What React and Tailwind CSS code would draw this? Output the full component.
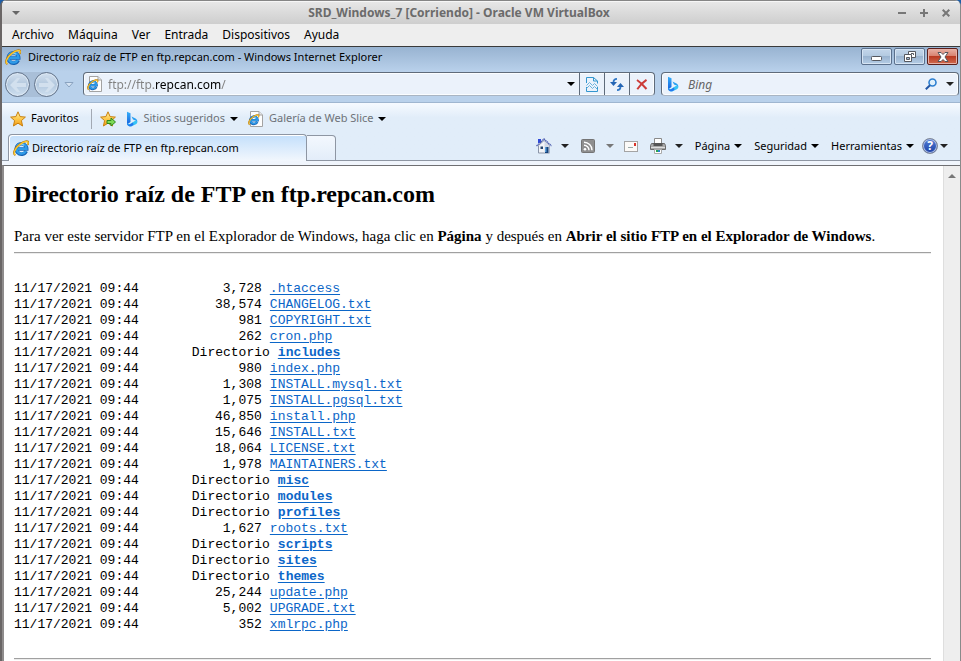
import React from "react";

const files = [
  ["3,728", ".htaccess"],
  ["38,574", "CHANGELOG.txt"],
  ["981", "COPYRIGHT.txt"],
  ["262", "cron.php"],
  [null, "includes"],
  ["980", "index.php"],
  ["1,308", "INSTALL.mysql.txt"],
  ["1,075", "INSTALL.pgsql.txt"],
  ["46,850", "install.php"],
  ["15,646", "INSTALL.txt"],
  ["18,064", "LICENSE.txt"],
  ["1,978", "MAINTAINERS.txt"],
  [null, "misc"],
  [null, "modules"],
  [null, "profiles"],
  ["1,627", "robots.txt"],
  [null, "scripts"],
  [null, "sites"],
  [null, "themes"],
  ["25,244", "update.php"],
  ["5,002", "UPGRADE.txt"],
  ["352", "xmlrpc.php"],
];

function IeMark() {
  return (
    <>
      <path d="M13.200 11.200A5.200 5.200 0 1 1 13.700 9H5" fill="none" stroke="#1763b4" strokeWidth="3.600" />
      <path d="M12.900 11A5 5 0 1 1 13.500 8.800H5" fill="none" stroke="#2f9be8" strokeWidth="2.400" />
      <path d="M4.200 6.500a5 5 0 0 1 7-1.200" fill="none" stroke="#7fd4fb" strokeWidth="1.400" />
      <path d="M2.400 15.200C-.8 13.600 2 7.600 6.800 4.200 10.800 1.200 15.200.2 15.400 2.400c.1.900-.2 1.600-.6 2.400" fill="none" stroke="#b97d10" strokeWidth="1.800" />
      <path d="M2.300 14.900C0 13.400 2.400 7.800 7 4.400 11 1.500 14.900.8 15.100 2.500c.1.700-.2 1.300-.5 2" fill="none" stroke="#fbc931" strokeWidth="1.300" />
    </>
  );
}

function IeIcon() {
  return (
    <svg className="size-4 shrink-0" viewBox="0 0 16 16" aria-hidden="true">
      <IeMark />
    </svg>
  );
}

function IePageIcon() {
  return (
    <svg className="size-4 shrink-0" viewBox="0 0 16 16" aria-hidden="true">
      <path d="M2.500.5h8.500l3.500 3.500v11.500h-12z" fill="#fdfdfd" stroke="#a3a3a3" />
      <path d="M11 .5V4h3.500" fill="#e8e8e8" stroke="#a3a3a3" />
      <g transform="translate(0 3) scale(.7)">
        <IeMark />
      </g>
    </svg>
  );
}

function Star({ arrow }) {
  return (
    <svg className="size-4 shrink-0" viewBox="0 0 16 16" aria-hidden="true">
      <defs>
        <linearGradient id={arrow ? "starB" : "starA"} x1="0" y1="0" x2="0" y2="1">
          <stop offset="0" stopColor="#fff3a8" />
          <stop offset=".5" stopColor="#fdc94b" />
          <stop offset="1" stopColor="#f39a16" />
        </linearGradient>
      </defs>
      <path
        d="M8 .8l2.100 4.800 5.300.5-4 3.500 1.200 5.400L8 12.200 3.400 15l1.200-5.400-4-3.500 5.300-.5z"
        fill={arrow ? "url(#starB)" : "url(#starA)"}
        stroke="#c8800f"
        strokeLinejoin="round"
      />
      {arrow && <path d="M7 9.500h4V7l4.500 4-4.500 4v-2.500H7z" fill="#7ed957" stroke="#2c8a1c" strokeLinejoin="round" />}
    </svg>
  );
}

function BingIcon({ id }) {
  return (
    <svg className="h-4 w-3 shrink-0" viewBox="0 0 12 16" aria-hidden="true">
      <defs>
        <linearGradient id={id} x1="0" y1="0" x2="0" y2="1">
          <stop offset="0" stopColor="#35b0fa" />
          <stop offset="1" stopColor="#1661dd" />
        </linearGradient>
      </defs>
      <path d="M1 .8l3.500 1.400v8.800L1 13.500z" fill={`url(#${id})`} />
      <path d="M5.500 5.600l4 1.800c1.500.8 2.200 2.200 1.700 4-.6-1.400-1.200-1.800-2.400-2.200L7 8.400z" fill="#2aa0f2" />
      <path d="M1 12.500l3 .5L8.800 10c1.500-.5 2.700.2 2.400 1.600-.2 1-.9 1.500-1.800 2L5.500 15.200c-2.300.7-4.500-.6-4.500-2.700z" fill="#35c3f5" />
      <path d="M1 12.500c.8 1.200 2 1.300 3 .7l3-1.800.5 2.300L5.500 15.200c-2.200.6-4.500-.6-4.500-2.700z" fill="#2478ee" />
    </svg>
  );
}

function Caret({ className = "text-black" }) {
  return (
    <svg className={`h-1 w-2 shrink-0 ${className}`} viewBox="0 0 8 4" aria-hidden="true">
      <path d="M0 0h8L4 4z" fill="currentColor" />
    </svg>
  );
}

function NavButton({ label, flip }) {
  return (
    <button
      aria-label={label}
      className="grid size-[25px] shrink-0 place-items-center rounded-full border border-[#64758c] bg-linear-to-b from-[#d3e0ee] via-[#b3c8de] to-[#cfe0f0] shadow-[inset_0_0_0_1px_#dce8f4]"
    >
      <svg className={flip ? "h-[14px] w-4 rotate-180" : "h-[14px] w-4"} viewBox="0 0 16 14" aria-hidden="true">
        <path d="M0 7l7-7h3L6.500 5H16v4H6.500l3.500 5H7z" fill="#d2e0ee" />
      </svg>
    </button>
  );
}

function HomeIcon() {
  return (
    <svg className="size-4" viewBox="0 0 16 16" aria-hidden="true">
      <path d="M2 1h3v4H2z" fill="#2f49d8" />
      <path d="M2.500 7.500L8 2.500l5.500 5V15h-11z" fill="#f2f4f8" stroke="#8b95a8" />
      <path d="M8.500 3l5 4.500V15h-5z" fill="#d4dae6" />
      <path d="M.5 8L8 1l7.500 7" fill="none" stroke="#4d5cae" strokeWidth="1.300" strokeDasharray="1.500 .5" />
      <path d="M4.500 8.500h2.500v2.500H4.500z" fill="#27456b" />
      <path d="M9 9h3.500v6H9z" fill="#16437a" />
      <path d="M9 9h1.500v5H9z" fill="#5aa0dc" />
    </svg>
  );
}

function RssIcon() {
  return (
    <svg className="size-[14px]" viewBox="0 0 14 14" aria-hidden="true">
      <rect x=".5" y=".5" width="13" height="13" rx="1" fill="#8f8f8f" stroke="#747474" />
      <circle cx="4" cy="10.200" r="1.300" fill="#fff" />
      <path d="M3 6.200a5 5 0 0 1 5 5M3 3.200a8 8 0 0 1 8 8" fill="none" stroke="#fff" strokeWidth="1.400" />
    </svg>
  );
}

function MailIcon() {
  return (
    <svg className="h-[11px] w-[14px]" viewBox="0 0 14 11" aria-hidden="true">
      <rect x=".5" y=".5" width="13" height="10" fill="#fbfaf8" stroke="#a4a4a4" />
      <path d="M10 2h2v3h-2z" fill="#d9342b" />
      <path d="M4 6.500h5" stroke="#9aa" />
    </svg>
  );
}

function PrinterIcon() {
  return (
    <svg className="size-4" viewBox="0 0 16 16" aria-hidden="true">
      <path d="M4.500.5h7V6h-7z" fill="#fff" stroke="#8a8a8a" />
      <path d="M1.500 5.500h13l1 2v4H.5v-4z" fill="#a8a8a8" stroke="#6b6b6b" />
      <path d="M3.500 5h9v3h-9z" fill="#555" />
      <path d="M1 9.500h14" stroke="#dedede" />
      <path d="M4.500 11.500h7v4h-7z" fill="#fff" stroke="#aaa" />
      <path d="M6 12h2v2H6z" fill="#29a64e" />
      <path d="M8 12h2v2H8z" fill="#297fd5" />
    </svg>
  );
}

function HelpIcon() {
  return (
    <span className="grid size-4 place-items-center rounded-full border border-[#7f8797] bg-linear-to-b from-[#5580d8] to-[#1c3fa4] text-[12px] leading-3 font-bold text-white shadow-[inset_0_0_0_1px_#aebfe6]">
      ?
    </span>
  );
}

function CaptionButton({ label, danger, children }) {
  return (
    <button
      aria-label={label}
      className={
        danger
          ? "grid h-[17px] w-[31px] place-items-center rounded-xs border border-[#5c1f1b] bg-[linear-gradient(#e8b0a4,#d98371_45%,#b93a22_50%,#cf6a50)] shadow-[inset_0_0_0_1px_#e6b0a6]"
          : "grid h-[17px] w-[31px] place-items-center rounded-xs border border-[#5b708c] bg-[linear-gradient(#c3d6ea,#b4cae1_45%,#9ab4d0_50%,#b5cde6)] shadow-[inset_0_0_0_1px_#d6e4f3]"
      }
    >
      {children}
    </button>
  );
}

function ToolMenu({ label }) {
  return (
    <button className="flex items-center gap-1">
      {label}
      <Caret />
    </button>
  );
}

function VmTitleBar() {
  return (
    <header className="flex h-6 shrink-0 items-center border-t border-[#858585] bg-linear-to-b from-[#e8e8e8] to-[#cecece] px-[10px] shadow-[inset_0_1px_0_#f6f6f6]">
      <button aria-label="Menú de la ventana"><Caret className="text-[#666]" /></button>
      <h1 className="flex-1 text-center text-[12px] font-bold text-[#6b6b6b]">SRD_Windows_7 [Corriendo] - Oracle VM VirtualBox</h1>
      <div className="flex justify-end gap-[14px] text-[#777]">
        <button aria-label="Minimizar ventana">
          <svg className="size-2" viewBox="0 0 8 8"><path d="M0 4h8" stroke="currentColor" strokeWidth="2" /></svg>
        </button>
        <button aria-label="Maximizar ventana">
          <svg className="size-2" viewBox="0 0 8 8"><path d="M0 4h8M4 0v8" stroke="currentColor" strokeWidth="2" /></svg>
        </button>
        <button aria-label="Cerrar ventana">
          <svg className="size-2" viewBox="0 0 8 8"><path d="M.7.7l6.600 6.600M7.300.7L.7 7.300" stroke="currentColor" strokeWidth="2" /></svg>
        </button>
      </div>
    </header>
  );
}

function BrowserTop() {
  return (
    <div className="shrink-0 border-b border-[#9fb6d0] bg-linear-to-b from-[#98b3d1] to-[#b9d1eb] to-45%">
      <div className="flex h-[25px] items-start justify-between pr-0.5">
        <div className="flex items-center gap-[7px] pt-px pl-[3px] text-[11px] leading-[18px]">
          <IeIcon />
          Directorio raíz de FTP en ftp.repcan.com - Windows Internet Explorer
        </div>
        <div className="flex gap-0.5 pt-px">
          <CaptionButton label="Minimizar">
            <svg className="mt-1 h-[5px] w-[11px]" viewBox="0 0 11 5"><rect x=".5" y=".5" width="10" height="4" rx="1" fill="#fff" stroke="#55585f" /></svg>
          </CaptionButton>
          <CaptionButton label="Restaurar">
            <svg className="h-[11px] w-3" viewBox="0 0 12 11">
              <path d="M4.500.5h7v6h-7z" fill="#fff" stroke="#55585f" />
              <path d="M7 2.500h2.500V4" fill="none" stroke="#55585f" />
              <path d="M.5 3.500h7v7h-7z" fill="#fff" stroke="#55585f" />
              <path d="M2.500 6.500h3v2h-3z" fill="#9db7d3" stroke="#55585f" />
            </svg>
          </CaptionButton>
          <CaptionButton label="Cerrar" danger>
            <svg className="h-[10px] w-3" viewBox="0 0 12 10">
              <path d="M1 .5h3l2 2 2-2h3L8 5l3 4.500H8l-2-2-2 2H1L4 5z" fill="#fff" stroke="#54565c" />
            </svg>
          </CaptionButton>
        </div>
      </div>
      <div className="flex h-[30px] items-start gap-[6px] pr-px pl-[3px]">
        <div className="flex h-[25px] items-center">
          <div className="flex gap-1 rounded-full bg-[#a9bfd8]">
            <NavButton label="Atrás" />
            <NavButton label="Adelante" flip />
          </div>
          <button aria-label="Páginas recientes" className="ml-1 p-px">
            <svg className="h-[6px] w-[10px]" viewBox="0 0 10 6"><path d="M1 .5h8l-4 4.500z" fill="#d6e4f3" stroke="#8aa3c0" /></svg>
          </button>
        </div>
        <div className="ml-0.5 flex h-6 min-w-0 flex-1 items-stretch rounded-sm border border-[#5f6b7a] border-b-[#a9b5c3] bg-[#ebf2fb] shadow-[inset_0_0_0_1px_#fafdff]">
          <div className="flex min-w-0 flex-1 items-center gap-[5px] pr-1 pl-[3px]">
            <IePageIcon />
            <input
              aria-label="Dirección"
              defaultValue="ftp://ftp.repcan.com/"
              className="h-5 min-w-0 flex-1 bg-[linear-gradient(to_right,#808080_46px,#000_46px,#000_113px,#808080_113px)] bg-clip-text text-[12px] text-transparent outline-none"
            />
            <button aria-label="Mostrar direcciones"><Caret /></button>
          </div>
          <button aria-label="Vista de compatibilidad" className="grid w-[25px] place-items-center border-l border-[#5f6b7a]">
            <svg className="h-[15px] w-3" viewBox="0 0 12 15">
              <path d="M.5 6V.5h7l4 3.500v2.500M7.500.5v3.500h4M.5 10v4.500h11V10" fill="none" stroke="#3396cf" />
              <path d="M.5 8.500L3.500 5.500l3 3 2-2 3 3M.5 11.500l3-3 3 3 2-2 3 3" fill="none" stroke="#6ab2dc" />
            </svg>
          </button>
          <button aria-label="Actualizar" className="grid w-[25px] place-items-center border-l border-[#5f6b7a]">
            <svg className="h-[13px] w-[14px]" viewBox="0 0 14 13">
              <path d="M7 .9C4.500.9 3.500 2 3.500 4.500M7 12.100c2.500 0 3.500-1 3.500-3.600" fill="none" stroke="#2f77c6" strokeWidth="1.800" />
              <path d="M0 4h7L3.500 8zM7 9h7l-3.500-4z" fill="#2465b4" />
            </svg>
          </button>
          <button aria-label="Detener" className="grid w-[25px] place-items-center border-l border-[#5f6b7a]">
            <svg className="h-[11px] w-3" viewBox="0 0 12 11"><path d="M1 1c3 2 7 6 9.500 9M10.500.8C7 3 3.500 7 1.300 10.300" fill="none" stroke="#cc3b38" strokeWidth="2" /></svg>
          </button>
        </div>
        <div className="flex h-6 w-[298px] shrink-0 items-center gap-[9px] rounded-sm border border-[#5f6b7a] border-b-[#a9b5c3] bg-[#ebf2fb] pr-1 pl-[5px] shadow-[inset_0_0_0_1px_#fafdff]">
          <BingIcon id="bingSearch" />
          <input aria-label="Buscar" placeholder="Bing" className="h-5 min-w-0 flex-1 text-[12px] italic outline-none placeholder:text-[#666]" />
          <button aria-label="Iniciar búsqueda">
            <svg className="size-3" viewBox="0 0 12 12">
              <circle cx="7.500" cy="4.500" r="3.500" fill="#dff0fc" stroke="#2d7fd0" strokeWidth="1.600" />
              <path d="M5 7.300L.8 11.300" stroke="#2257a6" strokeWidth="2" />
            </svg>
          </button>
          <button aria-label="Opciones de búsqueda"><Caret className="text-[#222]" /></button>
        </div>
      </div>
    </div>
  );
}

function FavoritesBar() {
  return (
    <nav aria-label="Favoritos" className="flex h-[31px] items-center pl-2 text-[11px] text-[#6e7278]">
      <button className="flex items-center gap-[5px] text-black">
        <Star />
        Favoritos
      </button>
      <span className="ml-[13px] h-5 w-px bg-[#a2a9b3]" />
      <button aria-label="Agregar a la barra de favoritos" className="ml-2">
        <Star arrow />
      </button>
      <button className="ml-[10px] flex items-center gap-[5px]">
        <BingIcon id="bingFavorites" />
        Sitios sugeridos
        <Caret />
      </button>
      <button className="ml-[10px] flex items-center gap-[5px]">
        <IePageIcon />
        Galería de Web Slice
        <Caret />
      </button>
    </nav>
  );
}

function TabRow() {
  return (
    <div className="flex h-[27px] items-stretch text-[11px]">
      <div className="w-[6px] border-b border-[#8e96a3]" />
      <button className="flex w-[299px] items-center gap-[3px] rounded-t border border-b-0 border-[#8e96a3] bg-linear-to-b from-[#c3dffb] to-[#f2f7fd] pl-1 shadow-[inset_1px_1px_0_#fff]">
        <IeIcon />
        Directorio raíz de FTP en ftp.repcan.com
      </button>
      <button
        aria-label="Nueva pestaña"
        className="mt-px w-[29px] rounded-tr border border-l-0 border-[#8e96a3] bg-linear-to-b from-[#f3f8fe] to-[#e3edf9]"
      />
      <div className="flex flex-1 items-center justify-end border-b border-[#8e96a3] pr-3 pb-0.5">
        <div className="flex items-center gap-3">
          <button aria-label="Página principal" className="flex items-center gap-[9px]"><HomeIcon /><Caret className="text-[#222]" /></button>
          <button aria-label="Fuentes" className="flex items-center gap-[11px]"><RssIcon /><Caret className="text-[#777]" /></button>
          <button aria-label="Leer correo" className="-ml-0.5"><MailIcon /></button>
          <button aria-label="Imprimir" className="flex items-center gap-[9px]"><PrinterIcon /><Caret className="text-[#222]" /></button>
          <ToolMenu label="Página" />
          <ToolMenu label="Seguridad" />
          <ToolMenu label="Herramientas" />
        </div>
        <button aria-label="Ayuda" className="ml-2 flex items-center gap-0.5"><HelpIcon /><Caret className="text-[#222]" /></button>
      </div>
    </div>
  );
}

function FtpListing() {
  return (
    <main className="min-w-0 flex-1 bg-white pr-3 pl-[10px] font-['Liberation_Serif','Times_New_Roman',serif]">
      <h2 className="pt-3 text-[24px] leading-8 font-bold">Directorio raíz de FTP en ftp.repcan.com</h2>
      <p className="pt-[14px] text-[15px] leading-6">
        Para ver este servidor FTP en el Explorador de Windows, haga clic en <b>Página</b> y después en{" "}
        <b>Abrir el sitio FTP en el Explorador de Windows</b>.
      </p>
      <hr className="mt-1 border-t border-b border-t-[#a0a0a0] border-b-[#ececec]" />
      <table className="mt-[27px] border-collapse font-['Liberation_Mono','Courier_New',monospace] text-[13px] leading-4">
        <tbody>
          {files.map(([size, name]) => (
            <tr key={name} className="h-4">
              <td className="p-0">11/17/2021 09:44</td>
              <td className={size ? "w-[131px] pr-2 text-right" : "w-[131px] text-right"}>{size ?? "Directorio"}</td>
              <td className={size ? "p-0" : "pl-2 font-bold"}>
                <a href={`#${name}`} className="text-[#0b66c8] underline underline-offset-2">{name}</a>
              </td>
            </tr>
          ))}
        </tbody>
      </table>
      <hr className="mt-[25px] border-t border-b border-t-[#a0a0a0] border-b-[#ececec]" />
    </main>
  );
}

export default function App() {
  return (
    <div className="h-screen overflow-hidden bg-[#1d5ea8]">
      <div className="flex h-full flex-col overflow-hidden rounded-t-md border-r border-l-2 border-r-[#8a8a8a] border-l-[#6a6666] bg-[#e1edf9] font-['Noto_Sans','Segoe_UI',sans-serif] text-black">
        <VmTitleBar />
        <nav aria-label="Menú" className="flex h-[23px] shrink-0 items-center gap-[14px] border-b border-[#3a3a3a] bg-[#eeeeee] pl-[10px] text-[12px]">
          {["Archivo", "Máquina", "Ver", "Entrada", "Dispositivos", "Ayuda"].map((item) => (
            <button key={item}>{item}</button>
          ))}
        </nav>
        <BrowserTop />
        <div className="shrink-0 bg-linear-to-b from-[#f6faff] to-[#e1edf9] to-25%">
          <FavoritesBar />
          <TabRow />
        </div>
        <div className="flex min-h-0 flex-1 border-t-4 border-[#f0f5fc]">
          <div className="flex min-w-0 flex-1 border-t border-l-2 border-t-[#6f6f72] border-l-[#8f8c8c] bg-white">
            <FtpListing />
            <div className="flex w-[17px] justify-center border-l border-[#dedede] bg-[#eeeeee] pt-2">
              <svg className="h-1 w-2" viewBox="0 0 8 4" aria-hidden="true"><path d="M0 4h8L4 0z" fill="#777" /></svg>
            </div>
          </div>
        </div>
      </div>
    </div>
  );
}
